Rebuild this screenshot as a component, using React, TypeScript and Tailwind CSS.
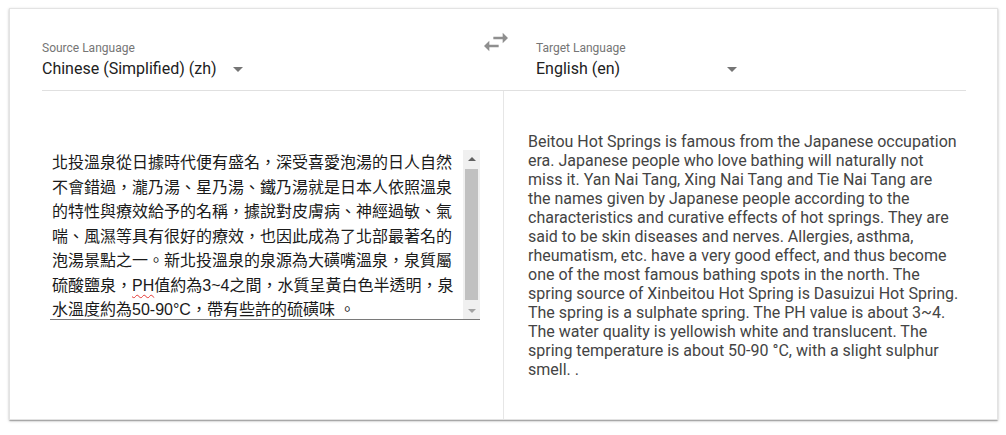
import React from 'react'

// Translation card: two language selects on top, source text box and translated text below
const sourceLines: React.ReactNode[] = [
  '北投溫泉從日據時代便有盛名，深受喜愛泡湯的日人自然',
  '不會錯過，瀧乃湯、星乃湯、鐵乃湯就是日本人依照溫泉',
  '的特性與療效給予的名稱，據說對皮膚病、神經過敏、氣',
  '喘、風濕等具有很好的療效，也因此成為了北部最著名的',
  '泡湯景點之一。新北投溫泉的泉源為大磺嘴溫泉，泉質屬',
  <>
    硫酸鹽泉，
    <span className="underline decoration-wavy decoration-[#e53935] decoration-1 underline-offset-[3px]">PH</span>
    值約為3~4之間，水質呈黃白色半透明，泉
  </>,
  '水溫度約為50-90°C，帶有些許的硫磺味 。',
]

const targetLines = [
  'Beitou Hot Springs is famous from the Japanese occupation',
  'era. Japanese people who love bathing will naturally not',
  'miss it. Yan Nai Tang, Xing Nai Tang and Tie Nai Tang are',
  'the names given by Japanese people according to the',
  'characteristics and curative effects of hot springs. They are',
  'said to be skin diseases and nerves. Allergies, asthma,',
  'rheumatism, etc. have a very good effect, and thus become',
  'one of the most famous bathing spots in the north. The',
  'spring source of Xinbeitou Hot Spring is Dasuizui Hot Spring.',
  'The spring is a sulphate spring. The PH value is about 3~4.',
  'The water quality is yellowish white and translucent. The',
  'spring temperature is about 50-90 °C, with a slight sulphur',
  'smell. .',
]

function LanguageSelect({ label, value }: { label: string; value: string }) {
  return (
    <div className="mt-[14px] flex flex-col">
      <div className="text-[12px] leading-[16px] text-[#757575]">{label}</div>
      <div className="mt-[1px] flex w-[201px] items-center justify-between">
        <span className="text-[16px] leading-[24px] text-[#212121]">{value}</span>
        <span className="mt-[1px] h-0 w-0 border-x-[5px] border-t-[5px] border-x-transparent border-t-[#757575]" />
      </div>
    </div>
  )
}

function SwapIcon() {
  return (
    <svg width="32" height="32" viewBox="0 0 24 24" className="shrink-0">
      <path
        d="M6.99 11L3 15l3.99 4v-3H14v-2H6.99v-3zM21 9l-3.99-4v3H10v2h7.01v3L21 9z"
        fill="#8f8f8f"
      />
    </svg>
  )
}

function FakeScrollbar() {
  return (
    <div className="flex w-[17px] shrink-0 flex-col bg-[#f0f0f0]">
      <div className="flex h-[17px] items-center justify-center">
        <span className="h-0 w-0 border-x-[4px] border-b-[4px] border-x-transparent border-b-[#606060]" />
      </div>
      <div className="mx-[2px] my-[2px] flex-1 bg-[#c1c1c1]" />
      <div className="flex h-[17px] items-center justify-center">
        <span className="h-0 w-0 border-x-[4px] border-t-[4px] border-x-transparent border-t-[#a3a3a3]" />
      </div>
    </div>
  )
}

export default function App() {
  return (
    <div className="min-h-[435px] bg-white pl-[9px] pt-[8px]" style={{ fontFamily: 'Roboto, "Liberation Sans", sans-serif' }}>
      <div className="flex h-[412px] w-[989px] flex-col border border-[#e3e3e3] bg-white shadow-[0_1px_3px_rgba(0,0,0,0.2),0_1px_1px_rgba(0,0,0,0.14),0_2px_1px_-1px_rgba(0,0,0,0.12)]">
        {/* Header */}
        <div className="ml-8 mr-[31px] flex items-start border-b border-[#e0e0e0] pb-[9px] pt-[17px]">
          <div className="w-[438px]">
            <LanguageSelect label="Source Language" value="Chinese (Simplified) (zh)" />
          </div>
          <SwapIcon />
          <div className="ml-6 flex-1">
            <LanguageSelect label="Target Language" value="English (en)" />
          </div>
        </div>

        {/* Body */}
        <div className="flex flex-1">
          <div className="w-[494px] shrink-0 border-r border-[#e6e6e6] pl-10 pt-[59px]">
            <div className="flex h-[170px] w-[430px] border-b border-[#7a7a7a]">
              <div
                className="flex-1 overflow-hidden whitespace-pre px-[2px] pt-[1px] text-[16px] leading-[24.5px] text-[#1a1a1a]"
                style={{ fontFamily: '"Liberation Sans", "Noto Sans CJK TC", sans-serif' }}
              >
                {sourceLines.map((line, i) => (
                  <div key={i}>{line}</div>
                ))}
              </div>
              <FakeScrollbar />
            </div>
          </div>

          <div className="flex-1 pl-6 pt-[41px] text-[16px] leading-[19px] text-[#444444]">
            {targetLines.map((line) => (
              <div key={line} className="whitespace-nowrap">
                {line}
              </div>
            ))}
          </div>
        </div>
      </div>
    </div>
  )
}
